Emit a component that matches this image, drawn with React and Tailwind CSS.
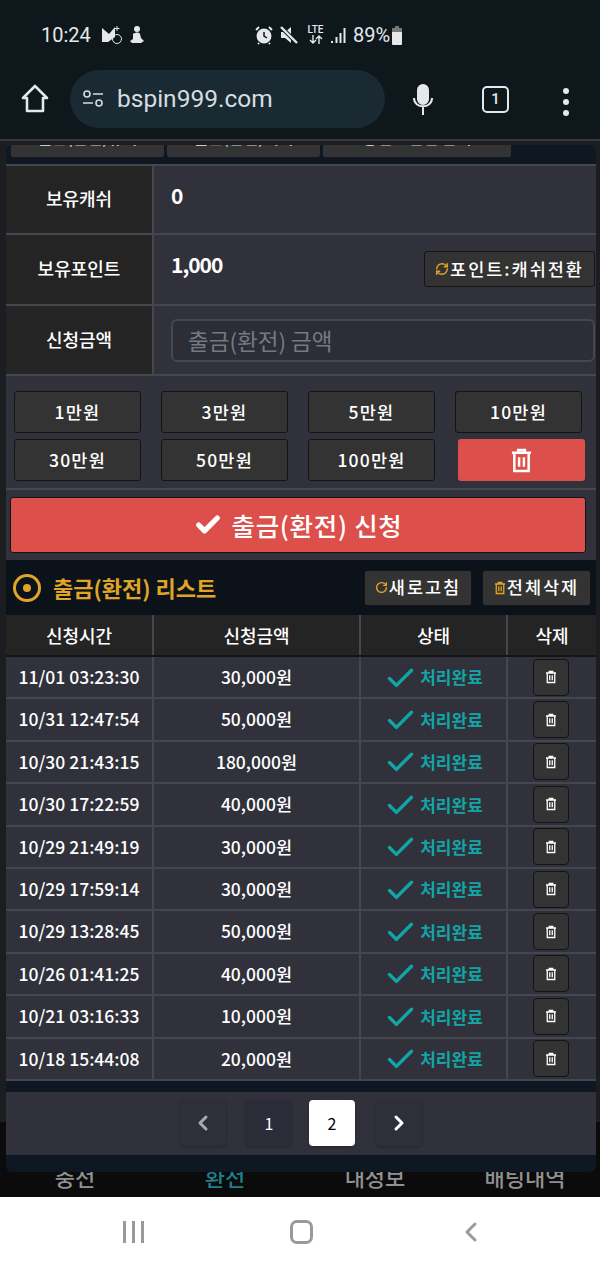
import { Check, ChevronLeft, ChevronRight, RefreshCw, RotateCw } from 'lucide-react'

const AMOUNTS = ['1만원', '3만원', '5만원', '10만원', '30만원', '50만원', '100만원']

const HISTORY = [
  ['11/01 03:23:30', '30,000원'],
  ['10/31 12:47:54', '50,000원'],
  ['10/30 21:43:15', '180,000원'],
  ['10/30 17:22:59', '40,000원'],
  ['10/29 21:49:19', '30,000원'],
  ['10/29 17:59:14', '30,000원'],
  ['10/29 13:28:45', '50,000원'],
  ['10/26 01:41:25', '40,000원'],
  ['10/21 03:16:33', '10,000원'],
  ['10/18 15:44:08', '20,000원'],
]

const KR = { fontFamily: '"Noto Sans CJK KR", "Noto Sans", sans-serif' }

// trash can as the site draws it: square body with two inner bars
function TrashIcon({ className }) {
  return (
    <svg viewBox="0 0 24 26" fill="none" stroke="currentColor" strokeWidth="2.6" className={className}>
      <path d="M2 5h20M8.5 5V2h7v3" />
      <path d="M4.5 5v19h15V5" />
      <path d="M9.5 9.5v10M14.5 9.5v10" />
    </svg>
  )
}

function StatusBar() {
  return (
    <div className="flex h-[70px] items-start pt-[22px] text-[#e4e8ea]" style={{ fontFamily: 'Roboto, sans-serif' }}>
      <span className="ml-[41px] w-[54px] text-[20px] leading-[26px]">10:24</span>
      <svg viewBox="0 0 22 20" className="mt-[3px] ml-[6px] h-[20px] w-[22px]" fill="currentColor">
        <path d="M1 3l7 6 6-7v10l-7 5H1z" />
        <circle cx="16" cy="14" r="4.5" fill="none" stroke="currentColor" strokeWidth="1" />
        <path d="M16 1v5M13.5 3.5h5" stroke="currentColor" strokeWidth="1" />
      </svg>
      <svg viewBox="0 0 16 20" className="mt-[3px] ml-[6px] h-[20px] w-[16px]" fill="currentColor">
        <circle cx="8" cy="4" r="3" />
        <path d="M4 9c3-2 6-2 7 0l1 4 3 3-3 2H3l-2-2 3-2z" />
      </svg>
      <svg viewBox="0 0 20 20" className="mt-[3px] ml-[109px] h-[20px] w-[20px]" fill="none" stroke="currentColor" strokeWidth="2">
        <circle cx="10" cy="11" r="6.5" fill="currentColor" />
        <path d="M10 7v4l3 2" stroke="#0d171c" strokeWidth="1.5" />
        <path d="M2 5l3-3M18 5l-3-3M5 18l-1 1M15 18l1 1" />
      </svg>
      <svg viewBox="0 0 20 20" className="mt-[3px] ml-[5px] h-[20px] w-[20px]" fill="currentColor">
        <path d="M2 7h4l6-5v16l-6-5H2z" />
        <path d="M2 2l16 16" stroke="#0d171c" strokeWidth="4" />
        <path d="M2 2l16 16" stroke="currentColor" strokeWidth="2.4" />
      </svg>
      <div className="mt-[3px] ml-[8px] flex w-[17px] flex-col items-center text-[10px] leading-[10px] font-medium">
        <span>LTE</span>
        <svg viewBox="0 0 16 9" fill="none" stroke="currentColor" strokeWidth="1.4" className="h-[9px] w-[16px]">
          <path d="M5 0v8M2 5l3 3 3-3M11 9V1M8 4l3-3 3 3" />
        </svg>
      </div>
      <svg viewBox="0 0 16 16" className="mt-[6px] ml-[6px] h-[16px] w-[16px]" fill="currentColor">
        <rect x="1" y="13" width="2" height="2" />
        <rect x="5.5" y="9" width="2" height="6" />
        <rect x="9.5" y="5" width="2" height="10" />
        <rect x="13.5" y="0" width="2" height="15" />
      </svg>
      <span className="ml-[7px] text-[20px] leading-[26px]">89%</span>
      <svg viewBox="0 0 12 19" className="mt-[4px] ml-[1px] h-[19px] w-[12px]">
        <path d="M4 0h4v2H4z" fill="#777" />
        <path d="M1 2h10v4H1z" fill="#777" />
        <path d="M1 6h10v12a1 1 0 01-1 1H2a1 1 0 01-1-1z" fill="#e8e8e8" />
      </svg>
    </div>
  )
}

function BrowserBar() {
  return (
    <div className="flex h-[69px] items-start text-[#e4e8ea]">
      <svg viewBox="0 0 28 30" fill="none" stroke="currentColor" strokeWidth="2.6" strokeLinejoin="round" className="mt-[14px] ml-[21px] h-[30px] w-[28px]">
        <path d="M14 2L2 14h4v13h16V14h4z" />
      </svg>
      <div className="ml-[21px] flex h-[58px] w-[315px] items-center rounded-full bg-[#1a2a32] pl-[12px]">
        <svg viewBox="0 0 22 20" fill="none" stroke="#d5dde0" strokeWidth="1.6" className="h-[20px] w-[22px]">
          <circle cx="5" cy="5" r="3" />
          <path d="M11 5h10M1 14h10" />
          <circle cx="17" cy="14" r="3" />
        </svg>
        <span className="ml-[13px] text-[24.5px] text-[#d5dde0]" style={{ fontFamily: 'Roboto, sans-serif' }}>bspin999.com</span>
      </div>
      <svg viewBox="0 0 22 32" className="mt-[14px] ml-[27px] h-[32px] w-[22px]" fill="none" stroke="currentColor" strokeWidth="2">
        <rect x="6" y="1" width="10" height="19" rx="5" fill="currentColor" />
        <path d="M2 14c0 11 18 11 18 0M11 23v8" />
      </svg>
      <div className="mt-[16px] ml-[48px] flex h-[27px] w-[27px] items-center justify-center rounded-[5px] border-[2.5px] border-[#e4e8ea] text-[15px] font-medium" style={{ fontFamily: 'Roboto, sans-serif' }}>1</div>
      <div className="mt-[18px] ml-[54px] flex flex-col gap-[5px]">
        <span className="h-[6px] w-[6px] rounded-full bg-[#e4e8ea]" />
        <span className="h-[6px] w-[6px] rounded-full bg-[#e4e8ea]" />
        <span className="h-[6px] w-[6px] rounded-full bg-[#e4e8ea]" />
      </div>
    </div>
  )
}

function Tab({ className, children }) {
  return (
    <div className={`flex h-[13px] items-end justify-center overflow-visible rounded-b-[3px] border-b border-[#17181b] bg-[#333335] ${className}`}>
      <span className="mb-[10px] text-[16px] leading-[20px] font-medium text-[#ccc]">{children}</span>
    </div>
  )
}

function FormRow({ label, className = '', children }) {
  return (
    <div className={`flex border-b-2 border-[#45474f] ${className}`}>
      <div className="flex w-[148px] items-center justify-center border-r-2 border-[#45474f] bg-[#242424] pb-[2px] text-[18px] font-medium text-white">{label}</div>
      <div className="relative flex min-w-0 flex-1">{children}</div>
    </div>
  )
}

function AmountButton({ children }) {
  return (
    <button className="h-[42px] w-[127px] rounded-[3px] border border-[#131416] bg-[#333333] text-[17.5px] font-medium tracking-[1.2px] text-white">{children}</button>
  )
}

function SmallButton({ icon, className, children }) {
  return (
    <button className={`flex h-[36px] items-center justify-center rounded-[3px] border border-[#131416] bg-[#333333] text-[17.5px] font-medium tracking-[2px] whitespace-nowrap text-white ${className}`}>
      {icon}
      {children}
    </button>
  )
}

function HistoryRow({ time, amount }) {
  return (
    <div className="grid h-[42.4px] grid-cols-[148px_207px_147px_88px] border-b-2 border-[#45474f] text-[17.5px] font-medium text-white">
      <div className="flex items-center justify-center border-r-2 border-[#45474f]">{time}</div>
      <div className="flex items-center justify-center border-r-2 border-[#45474f]">{amount}</div>
      <div className="flex items-center justify-center border-r-2 border-[#45474f]">
        <Check className="mt-[2px] h-[33px] w-[33px] text-[#12a5a5]" strokeWidth={2.5} />
        <span className="ml-[3px] text-[17px] font-bold text-[#12a5a5]">처리완료</span>
      </div>
      <div className="flex items-center justify-center pr-[2px]">
        <button className="flex h-[37px] w-[36px] items-center justify-center rounded-[4px] border border-[#131416] bg-[#333333] text-white">
          <TrashIcon className="h-[14px] w-[12px]" />
        </button>
      </div>
    </div>
  )
}

function PageButton({ active, flat, children }) {
  return (
    <button className={`flex h-[46px] w-[46px] items-center justify-center rounded-[4px] text-[16px] shadow-[0_1px_3px_rgba(0,0,0,0.3)] ${active ? 'bg-white text-black' : flat ? 'bg-[#2e2f38] text-white' : 'bg-[#2a2d37] text-white'}`}>{children}</button>
  )
}

function Modal() {
  return (
    <div className="absolute top-[4px] left-[6px] h-[1027px] w-[590px] overflow-hidden rounded-[6px] bg-[#0f1822]">
      <div className="flex gap-[3px] pl-[5px]">
        <Tab className="w-[153px]">출금(환전)규칙</Tab>
        <Tab className="w-[153px]">출금(환전)내역</Tab>
        <Tab className="w-[188px]">충전 · 환전 안내</Tab>
      </div>

      <div className="mt-[6px] border-t-2 border-[#45474f] bg-[#30313b]">
        <FormRow label="보유캐쉬" className="h-[69px]">
          <span className="mt-[14px] ml-[17px] text-[21px] leading-[30px] font-bold tracking-[-0.5px] text-white">0</span>
        </FormRow>
        <FormRow label="보유포인트" className="h-[71px]">
          <span className="mt-[14px] ml-[17px] text-[21px] leading-[30px] font-bold tracking-[-1px] text-white">1,000</span>
          <SmallButton
            className="absolute top-[16px] right-[1px] w-[171px]"
            icon={<RefreshCw className="mr-[1px] h-[14px] w-[14px] text-[#e0a526]" strokeWidth={2.5} />}
          >
            포인트:캐쉬전환
          </SmallButton>
        </FormRow>
        <FormRow label="신청금액" className="h-[70px]">
          <div className="mt-[13px] ml-[17px] flex h-[43px] w-[424px] items-center rounded-[6px] border-2 border-[#45474f] bg-[#2c2d36] pl-[15px] text-[22.5px] text-[#777982]">출금(환전) 금액</div>
        </FormRow>

        <div className="flex h-[114px] flex-col gap-[6px] border-b-2 border-[#45474f] pt-[15px] pl-[8px]">
          <div className="flex gap-[20px]">
            {AMOUNTS.slice(0, 4).map(a => <AmountButton key={a}>{a}</AmountButton>)}
          </div>
          <div className="flex gap-[20px]">
            {AMOUNTS.slice(4).map(a => <AmountButton key={a}>{a}</AmountButton>)}
            <button className="ml-[3px] flex h-[42px] w-[127px] items-center justify-center rounded-[3px] bg-[#dd4f4b] text-white">
              <TrashIcon className="h-[27px] w-[23px]" />
            </button>
          </div>
        </div>

        <div className="h-[70px] pt-[7px] pl-[4px]">
          <button className="flex h-[56px] w-[576px] items-center justify-center rounded-[3px] border border-[#131416] bg-[#dd4f4b] text-[25.5px] font-medium tracking-[0.7px] text-white">
            <Check className="mr-[10px] h-[28px] w-[28px]" strokeWidth={4.5} />
            출금(환전) 신청
          </button>
        </div>
      </div>

      <div className="flex h-[55px] items-center bg-[#0c1219] pr-[5px] pl-[7px]">
        <span className="flex h-[28px] w-[28px] items-center justify-center rounded-full border-[3px] border-[#e0a526]">
          <span className="h-[8px] w-[8px] rounded-full bg-[#e0a526]" />
        </span>
        <span className="ml-[12px] text-[22px] font-bold text-[#e0a526]">출금(환전) 리스트</span>
        <SmallButton
          className="ml-auto w-[108px]"
          icon={<RotateCw className="mr-[1px] h-[13px] w-[13px] text-[#e0a526]" strokeWidth={2.5} />}
        >
          새로고침
        </SmallButton>
        <SmallButton
          className="ml-[10px] w-[109px]"
          icon={<TrashIcon className="mr-[1px] h-[14px] w-[12px] text-[#e0a526]" />}
        >
          전체삭제
        </SmallButton>
      </div>

      <div className="bg-[#30313b]">
        <div className="grid h-[42px] grid-cols-[148px_207px_147px_88px] border-b-2 border-[#131416] bg-[#242424] text-[18px] font-medium text-white">
          <div className="flex items-center justify-center border-r-2 border-[#45474f]">신청시간</div>
          <div className="flex items-center justify-center border-r-2 border-[#45474f]">신청금액</div>
          <div className="flex items-center justify-center border-r-2 border-[#45474f]">상태</div>
          <div className="flex items-center justify-center">삭제</div>
        </div>
        {HISTORY.map(([time, amount]) => <HistoryRow key={time} time={time} amount={amount} />)}
      </div>

      <div className="mt-[11px] flex h-[63px] items-center justify-center bg-[#30313b]">
        <PageButton flat><ChevronLeft className="h-[24px] w-[24px] text-[#a8aab0]" strokeWidth={3} /></PageButton>
        <span className="ml-[20px]"><PageButton>1</PageButton></span>
        <span className="ml-[17px]"><PageButton active>2</PageButton></span>
        <span className="ml-[21px]"><PageButton flat><ChevronRight className="h-[24px] w-[24px]" strokeWidth={3} /></PageButton></span>
      </div>
    </div>
  )
}

export default function App() {
  return (
    <div className="flex h-[1267px] w-[600px] flex-col overflow-hidden bg-white" style={KR}>
      <div className="h-[139px] bg-[#0d171c]">
        <StatusBar />
        <BrowserBar />
      </div>

      <div className="relative flex h-[1058px] flex-col border-t-2 border-[#34393d] bg-[#1c1d21]">
        <div className="mt-auto grid h-[75px] grid-cols-4 bg-[#0b0b0c] pt-[39px] text-center text-[22px] leading-[30px] font-medium text-[#8f9193]">
          <span>충전</span>
          <span className="text-[#1f7f8c]">환전</span>
          <span>내정보</span>
          <span>배팅내역</span>
        </div>
        <Modal />
      </div>

      <div className="flex h-[70px] items-center text-[#9a9a9a]">
        <div className="ml-[123px] flex gap-[6px]">
          <span className="h-[22px] w-[3px] bg-[#9a9a9a]" />
          <span className="h-[22px] w-[3px] bg-[#9a9a9a]" />
          <span className="h-[22px] w-[3px] bg-[#9a9a9a]" />
        </div>
        <span className="ml-[146px] h-[24px] w-[23px] rounded-[7px] border-[3px] border-[#9a9a9a]" />
        <ChevronLeft className="ml-[142px] h-[32px] w-[32px]" strokeWidth={2.2} />
      </div>
    </div>
  )
}
